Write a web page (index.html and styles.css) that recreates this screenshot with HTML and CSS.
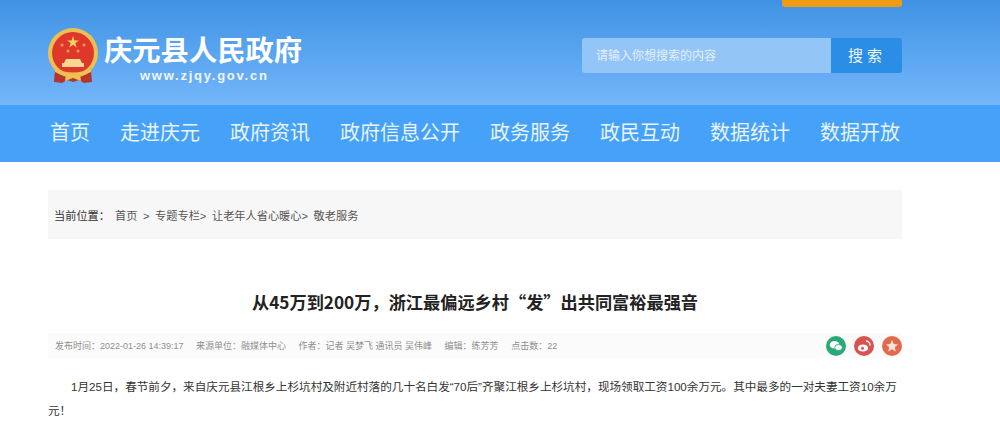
FILE: index.html
```html
<!DOCTYPE html>
<html lang="zh-CN">
<head>
  <meta charset="UTF-8" />
  <title>从45万到200万,浙江最偏远乡村“发”出共同富裕最强音</title>
  <link rel="stylesheet" href="styles.css">
</head>
<body>
  <div class="header">
    <div class="wrap header-inner">
      <div class="logo">
        <svg class="emblem" width="52" height="58" viewBox="0 0 52 58">
          <path d="M8 42 L7 54 L15 55 L20 52 L26 54 L32 52 L37 55 L45 54 L44 42 Z" fill="#b5352a"/>
          <circle cx="26" cy="25" r="25" fill="#f0bf52"/>
          <circle cx="26" cy="25" r="21" fill="#e0372b"/>
          <path d="M26 8 L27.4 12.4 L32 12.4 L28.3 15.1 L29.7 19.5 L26 16.8 L22.3 19.5 L23.7 15.1 L20 12.4 L24.6 12.4 Z" fill="#f6d365"/>
          <circle cx="15" cy="17" r="1.5" fill="#f6a04a"/>
          <circle cx="37" cy="17" r="1.5" fill="#f6a04a"/>
          <circle cx="21" cy="23" r="1.5" fill="#f6a04a"/>
          <circle cx="31" cy="23" r="1.5" fill="#f6a04a"/>
          <path d="M19 31 H33 L35 35 H37 V39 H15 V35 H17 Z" fill="#f6d890"/>
          <path d="M8 40 Q26 49 44 40 L44 44 Q26 53 8 44 Z" fill="#f0bf52"/>
          <path d="M19 46 L26 50 L33 46 L34 53 L26 50 L18 53 Z" fill="#f0bf52"/>
        </svg>
        <div class="logo-text">
          <div class="site-name">庆元县人民政府</div>
          <div class="site-url">www.zjqy.gov.cn</div>
        </div>
      </div>
      <div class="header-right">
        <div class="orange-tab"></div>
        <div class="search">
          <div class="search-input">请输入你想搜索的内容</div>
          <div class="search-btn">搜 索</div>
        </div>
      </div>
    </div>
  </div>

  <div class="nav">
    <div class="wrap nav-inner">
      <a class="nav-item">首页</a>
      <a class="nav-item">走进庆元</a>
      <a class="nav-item">政府资讯</a>
      <a class="nav-item">政府信息公开</a>
      <a class="nav-item">政务服务</a>
      <a class="nav-item">政民互动</a>
      <a class="nav-item">数据统计</a>
      <a class="nav-item">数据开放</a>
    </div>
  </div>

  <div class="wrap">
    <div class="crumb">
      <span class="crumb-label">当前位置&#xFF1A;</span>
      <span class="crumb-path">首页 &gt; 专题专栏&gt; 让老年人省心暖心&gt; 敬老服务</span>
    </div>

    <h1 class="title">从45万到200万&#xFF0C;浙江最偏远乡村“发”出共同富裕最强音</h1>

    <div class="meta">
      <div class="meta-list">
        <span>发布时间&#xFF1A;2022-01-26 14:39:17</span>
        <span>来源单位&#xFF1A;融媒体中心</span>
        <span>作者&#xFF1A;记者 吴梦飞 通讯员 吴伟峰</span>
        <span>编辑&#xFF1A;练芳芳</span>
        <span>点击数&#xFF1A;22</span>
      </div>
      <div class="share">
        <span class="share-btn wechat">
          <svg width="20" height="20" viewBox="0 0 20 20"><ellipse cx="8.5" cy="8.8" rx="4.8" ry="3.8" fill="#fff"/><ellipse cx="12.5" cy="11.5" rx="3.8" ry="3" fill="#fff" stroke="#2aa876" stroke-width="0.8"/></svg>
        </span>
        <span class="share-btn weibo">
          <svg width="20" height="20" viewBox="0 0 20 20"><ellipse cx="9" cy="12" rx="5.2" ry="3.6" fill="#fff"/><circle cx="8.5" cy="12.2" r="1.5" fill="#d9534f"/><path d="M12 5 A4 4 0 0 1 16 9.5" fill="none" stroke="#fff" stroke-width="1.4"/></svg>
        </span>
        <span class="share-btn star">
          <svg width="20" height="20" viewBox="0 0 20 20"><path d="M10 4 L11.8 8 L16 8.4 L12.8 11.2 L13.8 15.4 L10 13.2 L6.2 15.4 L7.2 11.2 L4 8.4 L8.2 8 Z" fill="#fbe3d6"/></svg>
        </span>
      </div>
    </div>

    <p class="article">1月25日&#xFF0C;春节前夕&#xFF0C;来自庆元县江根乡上杉坑村及附近村落的几十名白发“70后”齐聚江根乡上杉坑村&#xFF0C;现场领取工资100余万元。其中最多的一对夫妻工资10余万元&#xFF01;</p>
  </div>
</body>
</html>
```

FILE: styles.css
```css
body {
  margin: 0;
  background: #fff;
  font-family: "Liberation Sans", "Noto Sans CJK SC", sans-serif;
  color: #333;
  overflow: hidden;
}
.wrap {
  width: 854px;
  margin-left: 48px;
}
.header {
  height: 105px;
  background: linear-gradient(180deg, #3f93e4 0%, #74b6fb 100%);
}
.header-inner {
  display: flex;
  justify-content: space-between;
}
.logo {
  display: flex;
  align-items: flex-start;
  padding-top: 28px;
  gap: 5px;
  margin-left: -1px;
}
.logo-text {
  color: #fff;
}
.site-name {
  font-size: 28.3px;
  font-weight: 700;
  line-height: 34px;
  margin-top: 6px;
}
.site-url {
  font-size: 13px;
  font-weight: 700;
  letter-spacing: 1.75px;
  line-height: 16px;
  margin-left: 36px;
  color: #eef6ff;
}
.header-right {
  display: flex;
  flex-direction: column;
  align-items: flex-end;
}
.orange-tab {
  width: 120px;
  height: 7px;
  background: #f19b12;
  border-radius: 0 0 3px 3px;
}
.search {
  display: flex;
  margin-top: 31px;
  height: 35px;
}
.search-input {
  width: 235px;
  padding-left: 14px;
  background: #93c5f7;
  border-radius: 3px 0 0 3px;
  color: #e3f0fc;
  font-size: 12px;
  line-height: 37px;
}
.search-btn {
  width: 71px;
  padding-right: 3px;
  box-sizing: border-box;
  background: #2a8de6;
  border-radius: 0 3px 3px 0;
  color: #f0f7fe;
  font-size: 15px;
  line-height: 35px;
  text-align: center;
}
.nav {
  height: 57px;
  background: #45a2f8;
}
.nav-inner {
  display: flex;
  gap: 30px;
  padding-left: 2px;
}
.nav-item {
  color: #e9f4fe;
  font-size: 20px;
  line-height: 57px;
}
.crumb {
  margin-top: 28px;
  height: 49px;
  padding-left: 6px;
  display: flex;
  gap: 5px;
  align-items: center;
  background: #f7f7f7;
  font-size: 11.2px;
  color: #555;
}
.crumb-label {
  color: #333;
}
.crumb-path {
  word-spacing: 2.5px;
}
.title {
  margin: 51px 0 0;
  font-family: "Noto Sans CJK SC", sans-serif;
  font-size: 17.2px;
  font-weight: 700;
  line-height: 24px;
  text-align: center;
  color: #222;
}
.meta {
  margin-top: 19px;
  height: 25px;
  padding-left: 7px;
  display: flex;
  justify-content: space-between;
  align-items: center;
  background: #fbfbfb;
}
.meta-list {
  display: flex;
  gap: 12.5px;
  font-size: 9px;
  color: #8f8f8f;
}
.share {
  display: flex;
  gap: 8px;
}
.share-btn {
  width: 20px;
  height: 20px;
  border-radius: 50%;
  display: block;
}
.wechat { background: #2aa876; }
.weibo { background: #d9534f; }
.star { background: #e4694a; }
.article {
  margin: 17px 0 0;
  font-size: 11.6px;
  line-height: 24px;
  text-indent: 23px;
  color: #333;
}
```
